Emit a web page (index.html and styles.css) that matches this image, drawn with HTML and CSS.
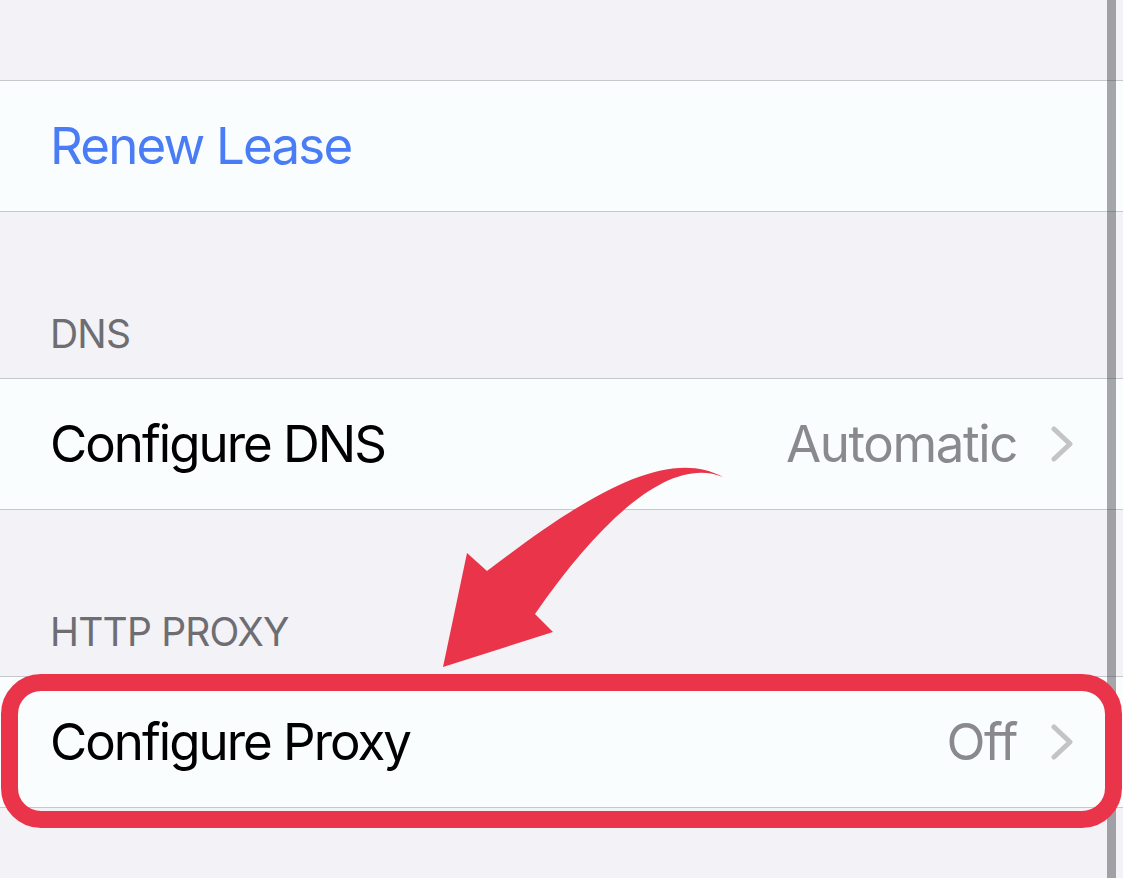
FILE: index.html
```html
<!DOCTYPE html>
<html lang="en">
<head>
  <meta charset="UTF-8">
  <meta name="viewport" content="width=device-width, initial-scale=1.0">
  <title>Wi-Fi Settings</title>

  <link rel="stylesheet" href="styles.css">

</head>

<body>
  <div id="wrap">
    <div class="top-gap"></div>

    <!-- 임대 갱신 -->
    <ul class="group">
      <li class="row">
        <span class="label link">Renew Lease</span>
      </li>
    </ul>

    <!-- DNS -->
    <h2 class="sec-tit">DNS</h2>
    <ul class="group">
      <li class="row">
        <span class="label">Configure DNS</span>
        <span class="value">Automatic</span>
        <svg class="chev" viewBox="0 0 22 36"><polyline points="3,3 19,18 3,33"/></svg>
      </li>
    </ul>

    <!-- HTTP 프록시 -->
    <h2 class="sec-tit">HTTP PROXY</h2>
    <ul class="group">
      <li class="row">
        <span class="label">Configure Proxy</span>
        <span class="value">Off</span>
        <svg class="chev" viewBox="0 0 22 36"><polyline points="3,3 19,18 3,33"/></svg>
      </li>
    </ul>

    <!-- 스크롤바 -->
    <div class="scrollbar"></div>

    <!-- 강조 박스 -->
    <div class="highlight"></div>

    <!-- 화살표 -->
    <svg class="arrow" viewBox="0 0 1123 878">
      <path d="M443 667 L467 553 L487 571 C580 500 665 445 723 477 C670 455 600 520 535 614 L553 632 Z"/>
    </svg>
  </div>
</body>
</html>
```

FILE: styles.css
```css
html, body{
  margin: 0;
  padding: 0;
  height: 100%;
}
body{
  background-color: #f2f2f7;
  font-family: Inter, "Noto Sans", sans-serif;
  overflow: hidden;
}
ul{
  margin: 0;
  padding: 0;
  list-style: none;
}

#wrap{
  position: relative;
  height: 100%;
}

.top-gap{
  height: 80px;
}

/* 셀 그룹 */
.group{
  background-color: #f9fdfe;
  border-top: 1px solid #c8c7cc;
  border-bottom: 1px solid #c8c7cc;
}

.row{
  display: flex;
  align-items: center;
  height: 130px;
  padding: 0 50px;
  font-size: 51px;
  line-height: 52px;
}

.label{
  color: #000;
  letter-spacing: -2px;
}
.label.link{
  color: #4a7cf6;
  letter-spacing: -1.8px;
}

.value{
  margin-left: auto;
  color: #8a8a8e;
  letter-spacing: -1.4px;
}

.chev{
  width: 22px;
  height: 36px;
  margin-left: 34px;
  fill: none;
  stroke: #c4c4c7;
  stroke-width: 5;
  stroke-linecap: round;
  stroke-linejoin: round;
}

/* 섹션 제목 */
.sec-tit{
  display: flex;
  align-items: flex-end;
  box-sizing: border-box;
  height: 166px;
  margin: 0;
  padding: 0 50px 25px;
  font-size: 39px;
  line-height: 39px;
  font-weight: normal;
  letter-spacing: -0.8px;
  color: #6d6d72;
}

/* 오버레이 */
.scrollbar{
  position: absolute;
  top: 0;
  bottom: 0;
  right: 7px;
  width: 9px;
  background-color: rgba(60, 60, 67, 0.45);
}

.highlight{
  position: absolute;
  left: 1px;
  top: 674px;
  width: 1121px;
  height: 154px;
  box-sizing: border-box;
  border: 17px solid #e9344a;
  border-radius: 40px;
}

.arrow{
  position: absolute;
  left: 0;
  top: 0;
  width: 1123px;
  height: 878px;
  fill: #e9344a;
}
```
